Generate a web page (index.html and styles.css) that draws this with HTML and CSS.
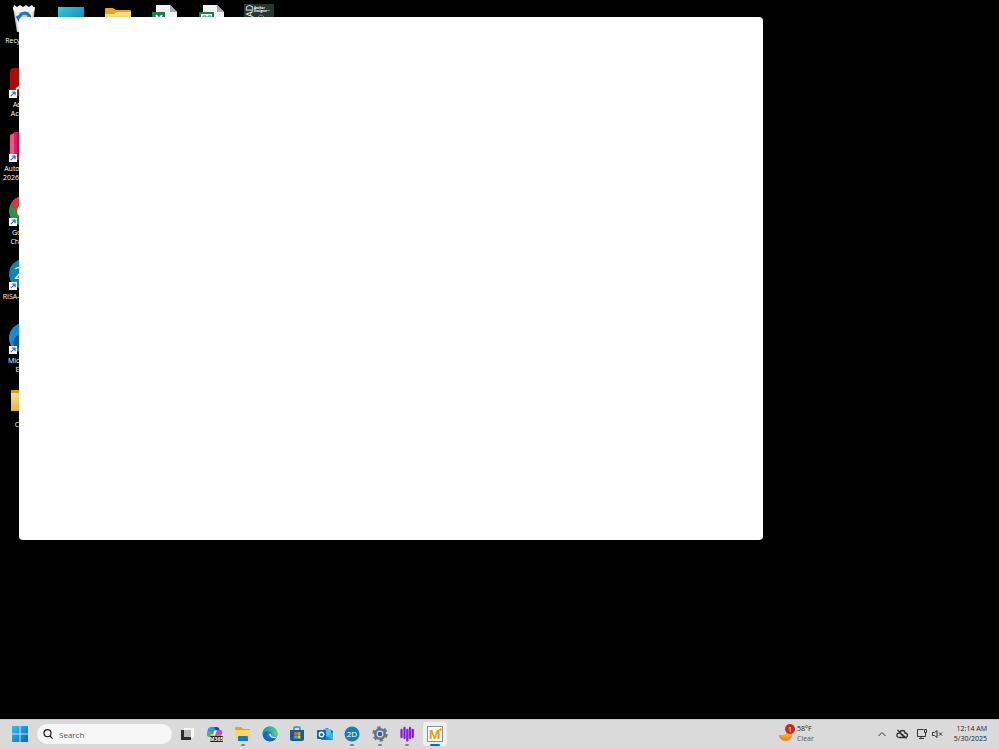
FILE: index.html
```html
<!DOCTYPE html>
<html lang="en">
<head>
    <meta charset="UTF-8">
    <meta name="viewport" content="width=device-width, initial-scale=1.0">
    <title>Desktop</title>
    <link rel="stylesheet" href="styles.css">
</head>
<body>
    <!-- shared symbols -->
    <svg class="defs" aria-hidden="true">
        <symbol id="shortcut" viewBox="0 0 8 8">
            <rect width="8" height="8" fill="#fff"/>
            <path d="M1.8 6.2 5.6 2.4M2.8 2h3.3v3.3" fill="none" stroke="#1b78c4" stroke-width="1.2"/>
        </symbol>
        <linearGradient id="folder" x1="0" y1="0" x2="0" y2="1">
            <stop offset="0" stop-color="#ffe08a"/>
            <stop offset="1" stop-color="#e3b344"/>
        </linearGradient>
        <linearGradient id="edge" x1="0" y1="0" x2="1" y2="1">
            <stop offset="0" stop-color="#2aa5e0"/>
            <stop offset="1" stop-color="#0c4fa8"/>
        </linearGradient>
        <linearGradient id="edgeTop" x1="0" y1="0" x2="1" y2="0">
            <stop offset="0" stop-color="#1587d8"/>
            <stop offset="1" stop-color="#5bd66e"/>
        </linearGradient>
        <linearGradient id="win" x1="0" y1="0" x2="1" y2="1">
            <stop offset="0" stop-color="#35bdf2"/>
            <stop offset="1" stop-color="#0568c4"/>
        </linearGradient>
        <linearGradient id="screen" x1="0" y1="0" x2="1" y2="1">
            <stop offset="0" stop-color="#36cbd9"/>
            <stop offset="1" stop-color="#0b79b8"/>
        </linearGradient>
    </svg>

    <main class="desktop">
        <div class="icons">
            <div class="row">
                <a class="icon" href="#">
                    <svg viewBox="0 0 30 30">
                        <path d="M4 3h22l-3 25H8z" fill="#c9ced3"/>
                        <path d="M6 6h4l2 21H9zM20 6h4l-2 21h-3z" fill="#e9ecee"/>
                        <path d="m4 5 1-4 3 2 3-2 3 2 3-2 3 2 3-2 3 4-2 3H6z" fill="#f1f1f1"/>
                        <path d="M10 15q1-6 6-6 5 1 5 6M8 12l3 5M18 13l5 3" fill="none" stroke="#1a76c7" stroke-width="3"/>
                    </svg>
                    <span>Recycle Bin</span>
                </a>
                <a class="icon" href="#" aria-label="This PC">
                    <svg viewBox="0 0 30 30"><rect x="2" y="3" width="26" height="20" fill="url(#screen)"/></svg>
                </a>
                <a class="icon" href="#" aria-label="Folder">
                    <svg viewBox="0 0 30 30">
                        <path d="M2 5q0-1 1-1h7l3 2h14q1 0 1 1v20H2z" fill="#e5a81c"/>
                        <path d="M2 10h9l3-2h14v19H2z" fill="url(#folder)"/>
                    </svg>
                </a>
                <a class="icon" href="#" aria-label="Spreadsheet">
                    <svg viewBox="0 0 30 30">
                        <path d="M6 1h14l7 7v21H6z" fill="#f2f2f2"/>
                        <path d="M20 1v7h7z" fill="#a9adb0"/>
                        <rect x="2" y="8" width="13" height="14" fill="#14804a"/>
                        <path d="m6 11 6 8m0-8-6 8" stroke="#fff" stroke-width="2"/>
                    </svg>
                </a>
                <a class="icon" href="#" aria-label="CSV file">
                    <svg viewBox="0 0 30 30">
                        <path d="M6 1h14l7 7v21H6z" fill="#f2f2f2"/>
                        <path d="M20 1v7h7z" fill="#a9adb0"/>
                        <rect x="3" y="9" width="13" height="13" fill="#fff" stroke="#14804a" stroke-width="2"/>
                        <path d="M6 12h3v5H6zm5 0h3v5h-3z" fill="none" stroke="#14804a"/>
                    </svg>
                </a>
                <a class="icon" href="#" aria-label="CAD Anchor Designer">
                    <svg viewBox="0 0 30 30">
                        <rect width="30" height="30" fill="#293632"/>
                        <text class="tile-side" transform="rotate(-90)" x="-13" y="9">AD</text>
                        <text class="tile-name" x="10" y="5">Anchor</text>
                        <text class="tile-name" x="10" y="8">Designer™</text>
                        <path d="M14 13q3-4 6 0" fill="none" stroke="#7d8784"/>
                    </svg>
                </a>
            </div>
            <a class="icon" href="#">
                <svg viewBox="0 0 30 30">
                    <rect x="1" width="28" height="28" rx="4" fill="#ad0b05"/>
                    <path d="M7 21q6-2 8-12 1-4 2 0 2 9 8 9-8-2-18 3z" fill="none" stroke="#fff" stroke-width="2"/>
                    <use href="#shortcut" y="22" width="8" height="8"/>
                </svg>
                <span>Adobe<br>Acrobat</span>
            </a>
            <a class="icon" href="#">
                <svg viewBox="0 0 30 30">
                    <path d="M1 3 7 0v28H1z" fill="#f0568d"/>
                    <path d="M5 0h24v28H5z" fill="#e31b5f"/>
                    <path d="M8 0h3v28H8z" fill="#b90e49"/>
                    <use href="#shortcut" y="22" width="8" height="8"/>
                </svg>
                <span>AutoCAD LT<br>2026 English</span>
            </a>
            <a class="icon" href="#">
                <svg viewBox="0 0 30 30">
                    <circle cx="15" cy="15" r="15" fill="#23964a"/>
                    <path d="M2 7.500A15 15 0 0 1 28 7.500H15L9 19z" fill="#db3a2e"/>
                    <path d="M28 7.500A15 15 0 0 1 15 30l7-12-7-10.500z" fill="#fbc31b"/>
                    <circle cx="15" cy="15" r="7" fill="#fff"/>
                    <circle cx="15" cy="15" r="5" fill="#3277e3"/>
                    <use href="#shortcut" y="22" width="8" height="8"/>
                </svg>
                <span>Google<br>Chrome</span>
            </a>
            <a class="icon" href="#">
                <svg viewBox="0 0 30 30">
                    <circle cx="15" cy="14" r="15" fill="#1481b5"/>
                    <text class="risa" x="5" y="19">2D</text>
                    <use href="#shortcut" y="22" width="8" height="8"/>
                </svg>
                <span>RISA-2D 20.0</span>
            </a>
            <a class="icon" href="#">
                <svg viewBox="0 0 30 30">
                    <circle cx="15" cy="14" r="15" fill="url(#edge)"/>
                    <path d="M0 13Q3 0 15 0t14 13q-1 7-9 5-2-9-9-9-7 0-11 4z" fill="#1789d6"/>
                    <path d="M5 22q-2-10 6-11-3 8 4 15z" fill="#0b56aa"/>
                    <use href="#shortcut" y="22" width="8" height="8"/>
                </svg>
                <span>Microsoft<br>Edge</span>
            </a>
            <a class="icon" href="#">
                <svg viewBox="0 0 30 30">
                    <path d="M2 3q0-1 1-1h8l3 2h13q1 0 1 1v18H2z" fill="#d99b1b"/>
                    <path d="M2 5h26v18H2z" fill="url(#folder)"/>
                </svg>
                <span>CADs</span>
            </a>
        </div>
        <section class="window" aria-label="Application window"></section>
    </main>

    <footer class="taskbar">
        <button class="start" aria-label="Start">
            <svg viewBox="0 0 16 16"><path d="M0 0h7.500v7.500H0zM8.500 0H16v7.500H8.500zM0 8.500h7.500V16H0zM8.500 8.500H16V16H8.500z" fill="url(#win)"/></svg>
        </button>
        <div class="search">
            <label for="search" aria-label="Search">
                <svg viewBox="0 0 10 10" fill="none" stroke="#222" stroke-width="1.2"><circle cx="4.500" cy="4.200" r="3.500"/><path d="m7 7 2.600 2.600"/></svg>
            </label>
            <input type="text" id="search" placeholder="Search">
        </div>
        <nav class="apps">
            <button class="app" aria-label="Task view">
                <svg viewBox="0 0 16 16"><rect x="4" y="2" width="10" height="10" fill="#f7f7f7"/><path d="M1 4h10v10H1z" fill="#2b2b2b"/><path d="M4 4h7v7H4z" fill="#b9b9b9"/></svg>
            </button>
            <button class="app" aria-label="Microsoft 365 Copilot">
                <svg viewBox="0 0 16 16">
                    <path d="M4 1h5L6 11H3q-4 0-3-4l1-4q1-2 3-2z" fill="#2b9bdd"/>
                    <path d="M.5 6h4L3 11q-4 0-2.500-5z" fill="#58b957"/>
                    <path d="M7 1h3q2 0 3 4h-3q-2 0-2-2z" fill="#1b43b8"/>
                    <path d="M10 4h3q3 0 2 4-1 3-4 3H7z" fill="#e657a4"/>
                    <path d="M10 4h3q3 0 2 4H9z" fill="#b254df"/>
                    <path d="M4 8h4l-1 3H3z" fill="#f5bf37"/>
                    <path d="m7 5 3-1-2 5H6z" fill="#edf0ef"/>
                    <rect x="3" y="10" width="13" height="6" rx="1" fill="#222"/>
                    <text class="m365" x="9.500" y="15">M365</text>
                </svg>
            </button>
            <button class="app running" aria-label="File Explorer">
                <svg viewBox="0 0 16 16"><path d="M0 2q0-1 1-1h5l2 2h6q1 0 1 1v10H0z" fill="#e9a51c"/><path d="M0 4h15v10H0z" fill="#ffd45b"/><path d="M3 15v-4q0-1 1-1h8q1 0 1 1v4z" fill="#1578c8"/></svg>
            </button>
            <button class="app" aria-label="Microsoft Edge">
                <svg viewBox="0 0 16 16"><circle cx="8" cy="8" r="7.500" fill="url(#edge)"/><path d="M.5 8Q1 .5 8 .5T15.500 8q0 3-4 3-3 0-2-2 1-3-3-4Q3 4 .5 8z" fill="url(#edgeTop)"/><path d="M7 8q1-1 2 0 0 3 3 3 2 0 3-1l-1 2q-6 1-7-4z" fill="#e1e8e9"/><path d="M6 6q-4 5 3 9-7 1-8-6 1-4 5-3z" fill="#1267b9"/></svg>
            </button>
            <button class="app" aria-label="Microsoft Store">
                <svg viewBox="0 0 16 16"><path d="M5 4V2q0-1 1-1h4q1 0 1 1v2" fill="none" stroke="#2891d8" stroke-width="1.500"/><path d="M1 4h14v9q0 2-2 2H3q-2 0-2-2z" fill="#155a9d"/><path d="M5 6h3v3H5z" fill="#f25733"/><path d="M8.500 6h3v3h-3z" fill="#80c938"/><path d="M5 9.500h3v3H5z" fill="#35b3ef"/><path d="M8.500 9.500h3v3h-3z" fill="#ffc928"/></svg>
            </button>
            <button class="app" aria-label="Outlook">
                <svg viewBox="0 0 16 16"><path d="m4 5 6-3 6 3v9H4z" fill="#1266b8"/><path d="M6 3h8v7H6z" fill="#55c4f1"/><path d="m4 14 12-8v8z" fill="#35b7ed"/><path d="m4 7 12 7H4z" fill="#158bd4"/><rect y="4" width="9" height="9" rx="1" fill="#0b64b4"/><circle cx="4.500" cy="8.500" r="2.200" fill="none" stroke="#fff" stroke-width="1.400"/></svg>
            </button>
            <button class="app running" aria-label="RISA-2D">
                <svg viewBox="0 0 16 16"><circle cx="8" cy="8" r="7.500" fill="#1580ad"/><text class="risa-small" x="8" y="11">2D</text></svg>
            </button>
            <button class="app running" aria-label="Settings">
                <svg viewBox="0 0 16 16"><circle cx="8" cy="8" r="6.500" fill="none" stroke="#717b86" stroke-width="2.500" stroke-dasharray="3.400"/><circle cx="8" cy="8" r="4.700" fill="#dce1e5" stroke="#65717e" stroke-width="2.500"/><circle cx="8" cy="8" r="2.300" fill="#1767ad"/></svg>
            </button>
            <button class="app running" aria-label="Audio bars">
                <svg viewBox="0 0 16 16" stroke="#8a20dc" stroke-width="2.300" stroke-linecap="round"><path d="M2.500 4v7M5.500 2v10M8.300 4v10.500M11 2v10M13.800 4v7"/></svg>
            </button>
            <button class="app active" aria-label="M application">
                <svg viewBox="0 0 16 16"><rect x=".5" y=".5" width="15" height="15" fill="#fff" stroke="#8c8f94"/><text class="m-logo" x="2" y="13">M</text><path d="M13.500 2v3M12 3.500h3" stroke="#eba11c"/></svg>
            </button>
        </nav>
        <button class="weather">
            <svg viewBox="0 0 18 18"><path d="M8 3q4 9-7 8 1 6 7 6 7-1 6-9-1-4-6-5z" fill="#f5a52b"/><path d="M1 11q1 6 7 6 5-1 6-5-7 4-13-1z" fill="#f08b24"/><circle cx="12" cy="5" r="5" fill="#c82a20"/><text class="badge" x="12" y="8">1</text></svg>
            <span>58°F<br><small>Clear</small></span>
        </button>
        <div class="tray">
            <button aria-label="Show hidden icons"><svg viewBox="0 0 12 12"><path d="m2.500 8 3.500-3.500L9.500 8"/></svg></button>
            <button aria-label="OneDrive"><svg viewBox="0 0 12 12"><path d="M3.500 9.500q-3 0-2.500-2.500 0-2 2.500-2Q4 2.500 6.500 2.500T9 5q2.500 0 2.500 2.200T9 9.500zM1.500 2l9 8.500M4 5l4 4" stroke-width="1.300"/></svg></button>
            <button class="network" aria-label="Network"><svg viewBox="0 0 12 12"><path d="M7.500 1.500H1.500v7h8V7M5 9v2M3 10.500h5M8.500 1.500h2v3h-2zM9.500 4.500V7"/></svg></button>
            <button class="sound" aria-label="Sound muted"><svg viewBox="0 0 12 12"><path d="M1.500 4.500h2L6 2.500v7L3.500 7.500h-2zM8 4.500l3 3M11 4.500l-3 3"/></svg></button>
            <button class="clock"><time datetime="2025-05-30T00:14">12:14 AM<br>5/30/2025</time></button>
        </div>
    </footer>
</body>
</html>
```
FILE: styles.css
```css
body {
    margin: 0;
    height: 100vh;
    display: flex;
    flex-direction: column;
    background: #000;
    font-family: "Open Sans", "Noto Sans", sans-serif;
    overflow: hidden;
}

button {
    padding: 0;
    border: none;
    background: none;
    font: inherit;
    color: inherit;
}

svg {
    display: block;
}

.defs {
    position: absolute;
    width: 0;
    height: 0;
}

.desktop {
    position: relative;
    flex: 1;
}

.icons {
    padding-top: 4px;
}

.row {
    display: flex;
}

.icon {
    display: flex;
    flex-direction: column;
    align-items: center;
    width: 47px;
    height: 64px;
    color: #fff;
    font-size: 7px;
    line-height: 9px;
    text-align: center;
    text-decoration: none;
    white-space: nowrap;
}

.icon svg {
    width: 30px;
    height: 30px;
    margin-bottom: 2px;
}

.window {
    position: absolute;
    left: 19px;
    top: 17px;
    width: 74.5%;
    height: 72.8%;
    border-radius: 4px;
    background: #fff;
}

.tile-side {
    font-size: 9px;
    fill: #fff;
}

.tile-name {
    font-size: 3px;
    font-weight: bold;
    fill: #fff;
}

.risa {
    font-size: 16px;
    fill: #fff;
}

.taskbar {
    box-sizing: border-box;
    display: flex;
    align-items: center;
    height: 30px;
    padding-bottom: 1px;
    border-top: 1px solid #c4c4c4;
    background: #dadada;
    color: #222;
    font-size: 7px;
    line-height: 10px;
}

.start {
    margin: 0 9px 0 12px;
}

.start svg,
.app svg {
    width: 16px;
    height: 16px;
}

.search {
    display: flex;
    align-items: center;
    gap: 6px;
    box-sizing: border-box;
    width: 135px;
    height: 20px;
    padding: 0 6px;
    border-radius: 10px;
    background: #f6f6f6;
}

.search svg {
    width: 10px;
    height: 10px;
}

.search input {
    flex: 1;
    min-width: 0;
    padding: 0;
    border: none;
    outline: none;
    background: none;
    font: 8px "Open Sans", sans-serif;
}

.search input::placeholder {
    color: #555;
}

.apps {
    display: flex;
    width: 275px;
    margin-left: 2px;
}

.app {
    flex: 1;
    display: flex;
    flex-direction: column;
    align-items: center;
    height: 24px;
    padding-top: 4px;
}

.app::after {
    content: "";
    width: 4px;
    height: 2px;
    margin-top: 2px;
    border-radius: 1px;
}

.running::after {
    background: #858585;
}

.active {
    flex: none;
    width: 24px;
    margin: 0 2px;
    border-radius: 3px;
    background: #efefef;
}

.active::after {
    width: 10px;
    background: #0871c4;
}

.m365 {
    font-size: 5px;
    font-weight: bold;
    text-anchor: middle;
    fill: #fff;
}

.risa-small {
    font-size: 8px;
    text-anchor: middle;
    fill: #fff;
}

.m-logo {
    font-family: Roboto, sans-serif;
    font-size: 13px;
    font-weight: bold;
    fill: #e89b18;
}

.weather {
    display: flex;
    align-items: center;
    gap: 1px;
    margin-left: auto;
    text-align: left;
}

.weather svg {
    width: 18px;
    height: 18px;
    margin-bottom: 3px;
}

.weather small {
    font-size: 7px;
    color: #555;
}

.badge {
    font-size: 7px;
    text-anchor: middle;
    fill: #fff;
}

.tray {
    display: flex;
    align-items: center;
    margin: 0 12px 0 62px;
}

.tray button {
    margin-right: 8px;
}

.tray svg {
    width: 12px;
    height: 12px;
    fill: none;
    stroke: #333;
}

.tray .network {
    margin-right: 3px;
}

.tray .sound {
    margin-right: 11px;
}

.tray .clock {
    margin-right: 0;
    text-align: right;
}
```
